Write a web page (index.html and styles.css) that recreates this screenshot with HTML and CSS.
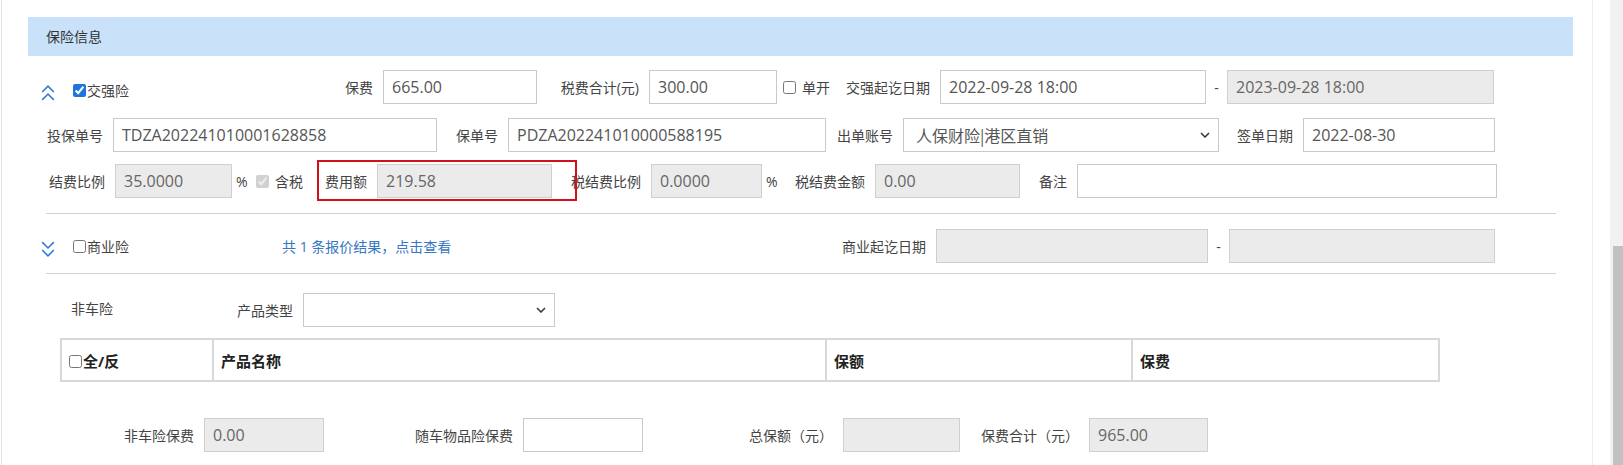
FILE: index.html
```html
<!DOCTYPE html>
<html lang="zh-CN">

<head>
    <meta charset="UTF-8">
    <meta name="viewport" content="width=device-width, initial-scale=1.0">
    <title>保险信息</title>
    <link rel="stylesheet" href="styles.css">
</head>

<body>
    <div class="main">
        <div class="panel">
            <div class="panel-title">保险信息</div>

            <!-- 交强险 -->
            <div class="row row-jq">
                <div class="toggle toggle-jq w-259">
                    <svg class="chevron" viewBox="0 0 13 17"><path d="M1 7.5 6.5 2 12 7.5M1 15 6.5 9.5 12 15"/></svg>
                    <input type="checkbox" class="chk toggle-chk" checked>
                    <span>交强险</span>
                </div>
                <span class="lbl w-83">保费</span>
                <input type="text" class="ipt w-154" value="665.00">
                <span class="lbl w-112">税费合计(元)</span>
                <input type="text" class="ipt w-128" value="300.00">
                <input type="checkbox" class="chk single-chk">
                <span class="chk-text">单开</span>
                <span class="lbl w-110">交强起讫日期</span>
                <input type="text" class="ipt w-266" value="2022-09-28 18:00">
                <span class="dash">-</span>
                <input type="text" class="ipt w-267" value="2023-09-28 18:00" disabled>
            </div>

            <div class="row row-gap">
                <span class="lbl w-111">投保单号</span>
                <input type="text" class="ipt w-324" value="TDZA202241010001628858">
                <span class="lbl w-71">保单号</span>
                <input type="text" class="ipt w-318" value="PDZA202241010000588195">
                <span class="lbl w-77">出单账号</span>
                <div class="select w-316">
                    <span class="select-text">人保财险|港区直销</span>
                    <svg class="arrow" viewBox="0 0 10 6"><path d="M1 1 5 5 9 1"/></svg>
                </div>
                <span class="lbl w-84">签单日期</span>
                <input type="text" class="ipt w-192" value="2022-08-30">
            </div>

            <div class="row row-fee">
                <span class="lbl w-113">结费比例</span>
                <input type="text" class="ipt w-117" value="35.0000" disabled>
                <span class="unit w-19">%</span>
                <input type="checkbox" class="chk tax-chk" checked disabled>
                <span class="chk-text">含税</span>
                <span class="lbl w-74">费用额</span>
                <input type="text" class="ipt w-175" value="219.58" disabled>
                <span class="lbl w-99">税结费比例</span>
                <input type="text" class="ipt w-111" value="0.0000" disabled>
                <span class="unit w-16">%</span>
                <span class="lbl w-97">税结费金额</span>
                <input type="text" class="ipt w-145" value="0.00" disabled>
                <span class="lbl w-57">备注</span>
                <input type="text" class="ipt w-420" value="">
                <div class="mark"></div>
            </div>

            <div class="divider divider-top"></div>

            <!-- 商业险 -->
            <div class="row row-sy">
                <div class="toggle w-241">
                    <svg class="chevron" viewBox="0 0 13 17"><path d="M1 2 6.5 7.5 12 2M1 9.5 6.5 15 12 9.5"/></svg>
                    <input type="checkbox" class="chk toggle-chk">
                    <span>商业险</span>
                </div>
                <a href="#" class="quote-link w-173">共 1 条报价结果，点击查看</a>
                <span class="lbl w-481">商业起讫日期</span>
                <input type="text" class="ipt w-272" value="" disabled>
                <span class="dash">-</span>
                <input type="text" class="ipt w-266" value="" disabled>
            </div>

            <div class="divider divider-bottom"></div>

            <!-- 非车险 -->
            <div class="row row-goods">
                <span class="goods-title">非车险</span>
                <span class="lbl w-132">产品类型</span>
                <div class="select w-252">
                    <span class="select-text"></span>
                    <svg class="arrow" viewBox="0 0 10 6"><path d="M1 1 5 5 9 1"/></svg>
                </div>
            </div>

            <table class="goods-table">
                <thead>
                    <tr>
                        <th class="col-check"><input type="checkbox" class="chk">全/反</th>
                        <th class="col-name">产品名称</th>
                        <th class="col-amount">保额</th>
                        <th class="col-fee">保费</th>
                    </tr>
                </thead>
            </table>

            <div class="row row-total">
                <span class="lbl w-202">非车险保费</span>
                <input type="text" class="ipt w-120" value="0.00" disabled>
                <span class="lbl w-199">随车物品险保费</span>
                <input type="text" class="ipt w-120" value="">
                <span class="lbl w-200">总保额（元）</span>
                <input type="text" class="ipt w-117" value="" disabled>
                <span class="lbl w-129">保费合计（元）</span>
                <input type="text" class="ipt w-119" value="965.00" disabled>
            </div>
        </div>
    </div>
    <div class="scrollbar">
        <div class="scrollbar-thumb"></div>
    </div>
</body>

</html>
```

FILE: styles.css
```css
* {
    margin: 0;
    padding: 0;
    box-sizing: border-box;
}

body {
    display: flex;
    height: 465px;
    overflow: hidden;
    background: #fff;
    font-family: "Open Sans", "Noto Sans CJK SC", sans-serif;
    font-size: 14px;
    color: #444;
}

.main {
    flex: 1;
}

.panel {
    margin-left: 1px;
    width: 1592px;
    height: 100%;
    padding-top: 17px;
    border-left: 1px solid #e6e6e6;
    border-right: 1px solid #ececec;
}

.panel-title {
    margin-left: 26px;
    width: 1545px;
    height: 39px;
    line-height: 39px;
    padding-left: 18px;
    background: #c9e1f9;
    color: #333;
}

/* rows */
.row {
    position: relative;
    display: flex;
    align-items: center;
    height: 34px;
}

.row-jq {
    margin-top: 14px;
}

.row-gap {
    margin-top: 14px;
}

.row-fee {
    margin-top: 12px;
}

.row-sy {
    margin-top: 15px;
}

.row-goods {
    margin-top: 19px;
}

.row-total {
    margin-top: 36px;
}

.lbl {
    flex-shrink: 0;
    padding-right: 10px;
    text-align: right;
    white-space: nowrap;
}

.ipt {
    flex-shrink: 0;
    height: 34px;
    padding: 0 8px;
    border: 1px solid #c9c9c9;
    background: #fff;
    font-family: "Open Sans", "Noto Sans CJK SC", sans-serif;
    font-size: 16px;
    color: #555;
    outline: none;
}

.ipt:disabled {
    background: #ebebeb;
    border-color: #cfcfcf;
    color: #666;
    -webkit-text-fill-color: #666;
    opacity: 1;
}

.select {
    flex-shrink: 0;
    display: flex;
    align-items: center;
    justify-content: space-between;
    height: 34px;
    padding: 0 8px 0 12px;
    border: 1px solid #c9c9c9;
    font-size: 16px;
    color: #555;
}

.select-text {
    font-family: "Noto Sans CJK SC", sans-serif;
}

.arrow {
    width: 10px;
    height: 6px;
    fill: none;
    stroke: #333;
    stroke-width: 1.5;
}

.chk {
    flex-shrink: 0;
    width: 13px;
    height: 13px;
    margin: 0;
    accent-color: #1f74dd;
}

.single-chk {
    margin-left: 6px;
}

.tax-chk {
    margin-left: 5px;
}

.chk-text {
    flex-shrink: 0;
    margin-left: 6px;
    white-space: nowrap;
}

.unit {
    flex-shrink: 0;
    padding-left: 4px;
    font-size: 14px;
}

.dash {
    flex-shrink: 0;
    width: 21px;
    text-align: center;
}

/* collapse toggles */
.toggle {
    flex-shrink: 0;
    display: flex;
    align-items: center;
    margin-left: 39px;
}

.toggle-jq {
    padding-top: 6px;
}

.chevron {
    width: 14px;
    height: 18px;
    margin-top: 6px;
    fill: none;
    stroke: #2f7bd8;
    stroke-width: 1.5;
}

.toggle-chk {
    margin-left: 18px;
    margin-right: 1px;
}

.quote-link {
    flex-shrink: 0;
    color: #3677c2;
    text-decoration: none;
    white-space: nowrap;
}

.mark {
    position: absolute;
    left: 315px;
    top: -4px;
    width: 260px;
    height: 41px;
    border: 2px solid #d0101b;
}

.divider {
    margin-left: 44px;
    width: 1510px;
    border-top: 1px solid #d2d2d2;
}

.divider-top {
    margin-top: 15px;
}

.divider-bottom {
    margin-top: 10px;
}

/* 非车险 */
.goods-title {
    flex-shrink: 0;
    width: 100px;
    margin-left: 69px;
    margin-bottom: 5px;
}

.goods-table {
    margin-top: 11px;
    margin-left: 58px;
    width: 1378px;
    border-collapse: collapse;
    table-layout: fixed;
}

.goods-table th {
    height: 42px;
    padding-left: 7px;
    border: 2px solid #d8d8d8;
    text-align: left;
    font-size: 15px;
    font-weight: bold;
    color: #222;
}

.goods-table th .chk {
    margin-right: 1px;
    vertical-align: -1px;
}

.col-check {
    width: 152px;
}

.col-name {
    width: 613px;
}

.col-amount {
    width: 306px;
}

.col-fee {
    width: 307px;
}

/* fake scrollbar */
.scrollbar {
    flex-shrink: 0;
    width: 13px;
    padding-top: 246px;
    padding-left: 3px;
    background: #f1f1f1;
}

.scrollbar-thumb {
    height: 100%;
    background: #c1c1c1;
}

/* widths */
.w-16 { width: 16px; }
.w-19 { width: 19px; }
.w-57 { width: 57px; }
.w-71 { width: 71px; }
.w-74 { width: 74px; }
.w-77 { width: 77px; }
.w-83 { width: 83px; }
.w-84 { width: 84px; }
.w-97 { width: 97px; }
.w-99 { width: 99px; }
.w-110 { width: 110px; }
.w-111 { width: 111px; }
.w-112 { width: 112px; }
.w-113 { width: 113px; }
.w-117 { width: 117px; }
.w-119 { width: 119px; }
.w-120 { width: 120px; }
.w-128 { width: 128px; }
.w-129 { width: 129px; }
.w-132 { width: 132px; }
.w-145 { width: 145px; }
.w-154 { width: 154px; }
.w-173 { width: 173px; }
.w-175 { width: 175px; }
.w-192 { width: 192px; }
.w-199 { width: 199px; }
.w-200 { width: 200px; }
.w-202 { width: 202px; }
.w-241 { width: 241px; }
.w-252 { width: 252px; }
.w-259 { width: 259px; }
.w-266 { width: 266px; }
.w-267 { width: 267px; }
.w-272 { width: 272px; }
.w-316 { width: 316px; }
.w-318 { width: 318px; }
.w-324 { width: 324px; }
.w-420 { width: 420px; }
.w-481 { width: 481px; }
```
